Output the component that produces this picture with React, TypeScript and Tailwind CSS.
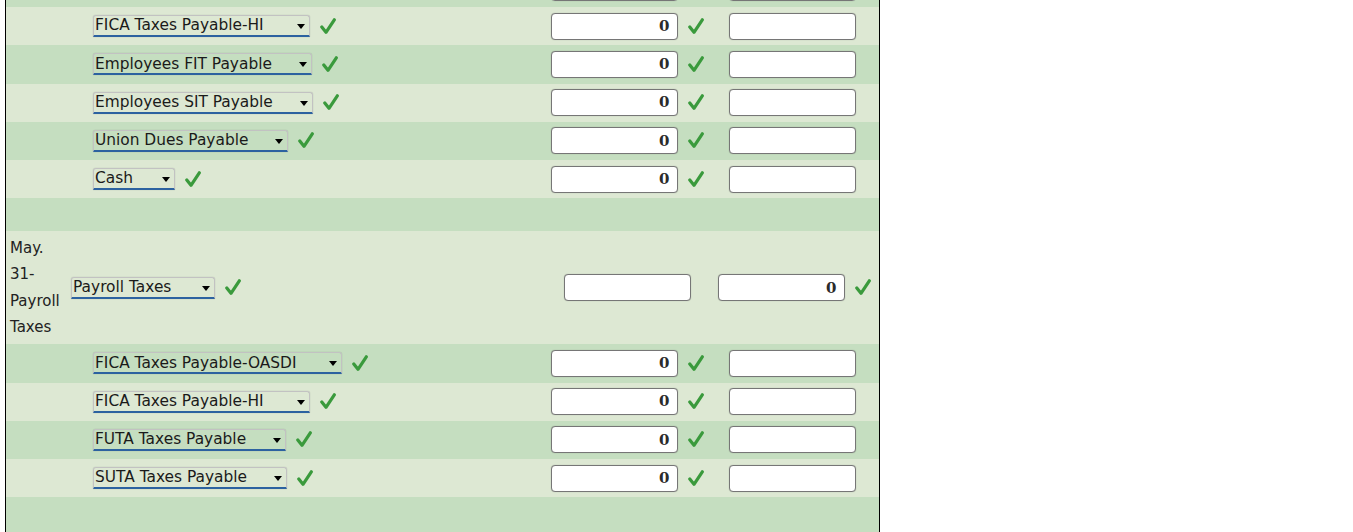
import React from "react";

const LIGHT = "bg-[#dde8d3]";
const DARK = "bg-[#c5dec0]";

function Check() {
  return (
    <svg width="16" height="17" viewBox="0 0 16 17" className="shrink-0">
      <path d="M1.8 9 L6 14.3 L14.3 1.8" fill="none" stroke="#3a9a3c" strokeWidth="3.2" strokeLinecap="round" strokeLinejoin="round" />
    </svg>
  );
}

function Select({ label, w }: { label: string; w: number }) {
  return (
    <div
      className="relative flex h-[22px] items-center rounded-t-[3px] border border-[#c2c2c2] border-b-2 border-b-[#2c62a0] pl-[1px] pt-[1px] text-[15.4px] leading-none text-[#1a1a1a] shadow-[0_0_1px_rgba(0,0,0,0.3)]"
      style={{ width: w, fontFamily: '"DejaVu Sans", Verdana, sans-serif' }}
    >
      <span className="whitespace-nowrap">{label}</span>
      <span className="absolute right-[4px] top-[8px] h-0 w-0 border-x-[4px] border-t-[5px] border-x-transparent border-t-black" />
    </div>
  );
}

function Input({ value }: { value?: string }) {
  return (
    <div
      className="flex h-[27px] w-[127px] items-center justify-end rounded-[4px] border border-[#767676] bg-white pr-[7px] text-[15px] font-bold text-[#2b2b2b] shadow-[0_0_1px_rgba(0,0,0,0.3)]"
      style={{ fontFamily: '"DejaVu Serif", Georgia, serif' }}
    >
      {value}
    </div>
  );
}

function Row({
  bg,
  label,
  w,
  top,
}: {
  bg: string;
  label: string;
  w: number;
  top?: boolean;
}) {
  return (
    <div className={`grid h-[38.25px] shrink-0 grid-cols-[60px_479px_164px_170px] items-center ${bg} ${top ? "-mt-[31.25px]" : ""}`}>
      <div />
      <div className="flex items-center gap-[10px] pl-[27px]">
        <Select label={label} w={w} />
        <Check />
      </div>
      <div className="flex items-center justify-center gap-[10px]">
        <Input value="0" />
        <Check />
      </div>
      <div className="flex items-center justify-center pr-[4px]">
        <Input />
      </div>
    </div>
  );
}

export default function App() {
  return (
    <div className="h-[532px] w-[1353px] overflow-hidden bg-white" style={{ fontFamily: '"DejaVu Sans", Verdana, sans-serif' }}>
      <div className="ml-[5px] flex h-[532px] w-[875px] flex-col overflow-hidden border-x border-black">
        <Row bg={DARK} label="FICA Taxes Payable-OASDI" w={249} top />
        <Row bg={LIGHT} label="FICA Taxes Payable-HI" w={217} />
        <Row bg={DARK} label="Employees FIT Payable" w={219} />
        <Row bg={LIGHT} label="Employees SIT Payable" w={220} />
        <Row bg={DARK} label="Union Dues Payable" w={195} />
        <Row bg={LIGHT} label="Cash" w={82} />
        <div className={`h-[33px] shrink-0 ${DARK}`} />
        <div className={`grid h-[113px] shrink-0 grid-cols-[60px_479px_164px_170px] items-center ${LIGHT}`}>
          <div className="pl-[4px] text-[15px] leading-[26.5px] text-[#222]">
            May.
            <br />
            31-
            <br />
            Payroll
            <br />
            Taxes
          </div>
          <div className="flex items-center gap-[10px] pl-[5px]">
            <Select label="Payroll Taxes" w={144} />
            <Check />
          </div>
          <div className="flex items-center justify-center">
            <Input />
          </div>
          <div className="flex items-center justify-center gap-[10px]">
            <Input value="0" />
            <Check />
          </div>
        </div>
        <Row bg={DARK} label="FICA Taxes Payable-OASDI" w={249} />
        <Row bg={LIGHT} label="FICA Taxes Payable-HI" w={217} />
        <Row bg={DARK} label="FUTA Taxes Payable" w={193} />
        <Row bg={LIGHT} label="SUTA Taxes Payable" w={194} />
        <div className={`h-[60px] shrink-0 ${DARK}`} />
      </div>
    </div>
  );
}
